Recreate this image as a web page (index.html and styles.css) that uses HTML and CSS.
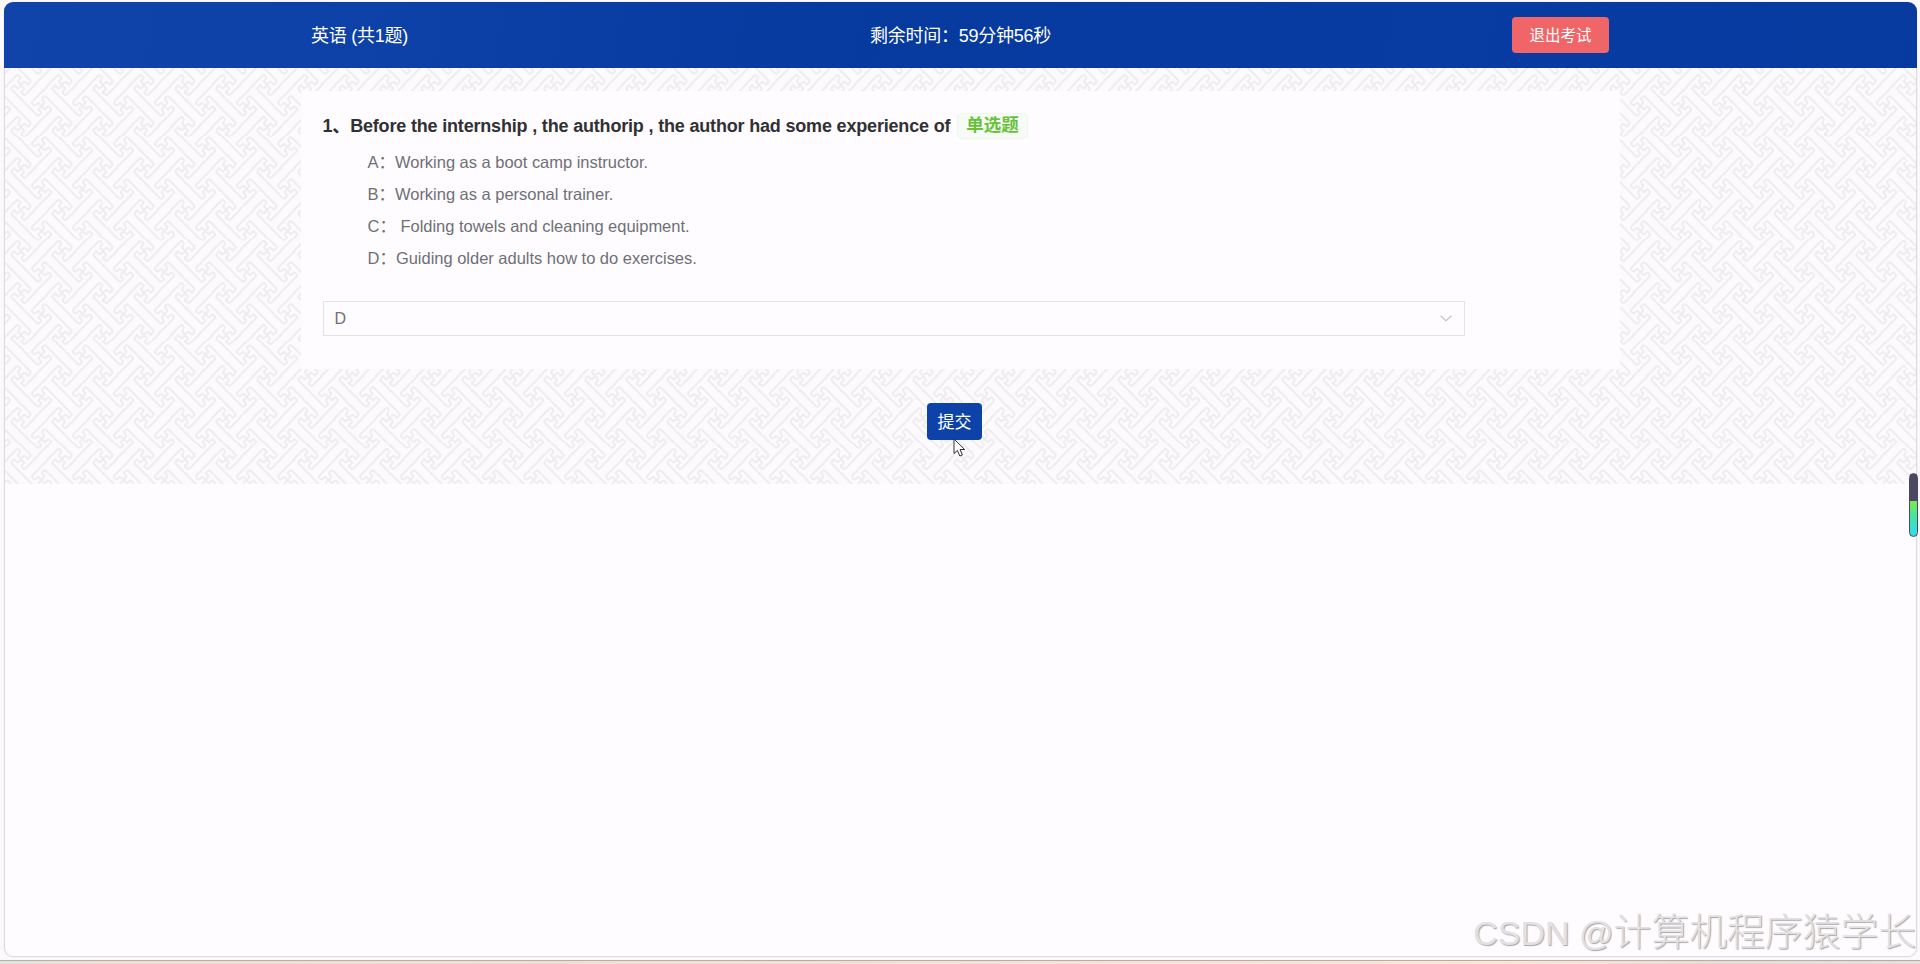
FILE: index.html
```html
<!DOCTYPE html>
<html lang="zh-CN">
<head>
    <meta charset="UTF-8">
    <meta name="viewport" content="width=device-width, initial-scale=1.0">
    <title>在线考试</title>
    <link rel="stylesheet" href="styles.css">
</head>
<body>
    <div class="window">
        <header class="header">
            <div class="subject"><span>英语 (共1题)</span></div>
            <div class="timer"><span>剩余时间：59分钟56秒</span></div>
            <div class="actions"><button class="exit-button">退出考试</button></div>
        </header>

        <main class="exam">
            <section class="card">
                <div class="question">
                    <span class="question-text">1、Before the internship , the authorip , the author had some experience of</span>
                    <span class="tag">单选题</span>
                </div>
                <ul class="options">
                    <li><span class="key">A：</span>Working as a boot camp instructor.</li>
                    <li><span class="key">B：</span>Working as a personal trainer.</li>
                    <li><span class="key">C：</span>&nbsp;Folding towels and cleaning equipment.</li>
                    <li><span class="key">D：</span>Guiding older adults how to do exercises.</li>
                </ul>
                <div class="select">
                    <span>D</span>
                    <svg width="12" height="7" viewBox="0 0 12 7"><path d="M0.5 0.7L6 5.8L11.5 0.7" fill="none" stroke="#c3c4cb" stroke-width="1.2"/></svg>
                </div>
            </section>
            <button class="submit-button">提交</button>
        </main>
    </div>

    <svg class="cursor" width="14" height="20" viewBox="0 0 14 20">
        <path d="M1 1V15.5L4.4 12.4L6.8 18L9.4 17L7 11.5H11.7Z" fill="#fff" stroke="#333" stroke-width="1"/>
    </svg>
    <div class="gauge"></div>
    <div class="watermark"><span class="latin">CSDN @</span>计算机程序猿学长</div>
    <div class="desktop-edge"></div>
</body>
</html>
```
FILE: styles.css
```css
* {
    box-sizing: border-box;
}
body {
    margin: 0;
    height: 964px;
    padding: 2px 4px 0;
    position: relative;
    overflow: hidden;
    background-color: #fbf9fc;
    font-family: "Liberation Sans", Arial, "Noto Sans CJK SC", sans-serif;
    color: #606266;
}
button {
    border: none;
    padding: 0 0 2px;
    font-family: inherit;
    color: #fff;
}
.window {
    width: 1913px;
    height: 955px;
    overflow: hidden;
    border-radius: 9px;
    background-color: #fefcff;
    box-shadow: inset 0 0 0 1px #dcdbdf, 0 0 1px #c8c7cb;
}
.header {
    display: flex;
    align-items: center;
    height: 66px;
    padding: 0 307px;
    background: linear-gradient(100deg, #1044aa 0%, #0e41a7 20%, #063a9f 45%, #093ca2 75%, #063a9f 100%);
    color: #fff;
    font-size: 18px;
}
.header > div {
    flex: 1;
}
.subject span, .timer span {
    display: block;
    padding-bottom: 2px;
    letter-spacing: -0.25px;
}
.timer {
    text-align: center;
}
.actions {
    display: flex;
    justify-content: flex-end;
}
.exit-button {
    width: 97px;
    height: 36px;
    margin-right: 1px;
    border-radius: 4px;
    background-color: #f06568;
    font-size: 15.5px;
}
/* key fret tile, 12 x 12 steps */
.exam {
    display: flex;
    flex-direction: column;
    align-items: center;
    height: 416px;
    margin: 0 1px;
    padding-top: 23px;
    background-color: #fcfafd;
    background-image: url("data:image/svg+xml,%3Csvg xmlns='http://www.w3.org/2000/svg' width='12' height='12' viewBox='0 0 12 12'%3E%3Cg fill='none' stroke='%23efedf0' stroke-width='.62' stroke-linejoin='round'%3E%3Cpath id='k' d='M0 0L.7 .7Q1 1 .7 1.3L.3 1.7Q0 2 .3 2.3L.6 2.6Q1 3 1.4 2.6L5-1M0 0L.7-.7Q1-1 1.3-.7L1.7-.3Q2 0 2.3-.3L2.6-.6Q3-1 2.6-1.4L-1-5M0 0L-.7-.7Q-1-1-.7-1.3L-.3-1.7Q0-2-.3-2.3L-.6-2.6Q-1-3-1.4-2.6L-5 1M0 0L-.7 .7Q-1 1-1.3 .7L-1.7 .3Q-2 0-2.3 .3L-2.6 .6Q-3 1-2.6 1.4L1 5'/%3E%3Cuse href='%23k' x='12'/%3E%3Cuse href='%23k' y='12'/%3E%3Cuse href='%23k' x='12' y='12'/%3E%3Cuse href='%23k' transform='matrix(0 1 1 0 6 6)'/%3E%3C/g%3E%3C/svg%3E");
    background-size: 41px 41.6px;
    background-position: 15.5px 17px;
}
.card {
    width: 1319px;
    height: 278px;
    margin-right: 1px;
    padding: 20px 22px 0;
    background-color: #fefcff;
}
.question {
    display: flex;
    align-items: center;
    height: 28px;
    color: #303133;
    font-size: 18px;
    font-weight: bold;
}
.question-text {
    padding-bottom: 3px;
    letter-spacing: -0.18px;
}
.tag {
    height: 26px;
    margin: 2px 0 0 7px;
    padding: 0 8px;
    border: 1px solid #eef7ec;
    border-radius: 4px;
    background-color: #f7fbf6;
    color: #67c23a;
    font-size: 17.5px;
    line-height: 22px;
}
.options {
    margin: 7px 0 0;
    padding: 0 0 0 45px;
    list-style: none;
    font-size: 16.5px;
    line-height: 32px;
    color: #6f7075;
    letter-spacing: -0.02px;
}
.key {
    display: inline-block;
}
.select {
    display: flex;
    align-items: center;
    justify-content: space-between;
    width: 1142px;
    height: 35px;
    margin-top: 27px;
    padding: 0 12px 0 11px;
    border: 1px solid #e2e2e7;
    font-size: 16px;
    color: #6f7075;
}
.submit-button {
    width: 55px;
    height: 37px;
    margin: 34px 12px 0 0;
    border-radius: 4px;
    background-color: #0d43a8;
    font-size: 17px;
}
.cursor {
    position: absolute;
    left: 953px;
    top: 438px;
}
.gauge {
    position: absolute;
    left: 1909px;
    top: 473px;
    width: 9px;
    height: 64px;
    border: 1px solid #4b4862;
    border-radius: 5px;
    background: linear-gradient(#4b4862 27px, #7fe84a 27px, #45e6a0 42px, #2fdcf0 62px);
}
.watermark {
    position: absolute;
    right: 4px;
    bottom: 3px;
    color: #e2e1e3;
    font-size: 37.8px;
    font-weight: 300;
    line-height: 56px;
    white-space: nowrap;
    text-shadow: 1px 1px 1px #a5a5a5;
}
.latin {
    font-size: 34px;
}
.desktop-edge {
    position: absolute;
    left: 0;
    right: 0;
    bottom: 0;
    height: 4px;
    border-top: 1px solid #b5adab;
    background: linear-gradient(90deg, #dfe3dc, #ecdfd6 5%, #f0e2d8 50%, #fbe8d0 78%, #e6dcd5 90%, #e4dfdc);
}
```
